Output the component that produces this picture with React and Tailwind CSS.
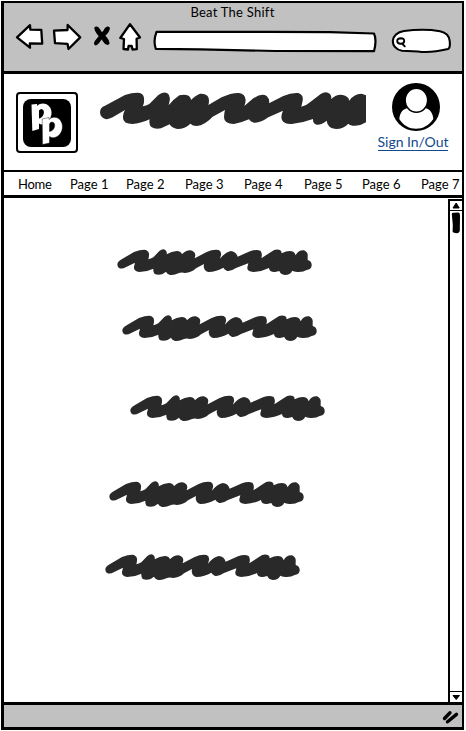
import React from "react";

const SMALL = "M22 73 Q22 65 35 58 L72 36 Q95 28 108 30 Q119 35 117 45 Q117 53 115 58 Q122 57 130 52 L148 33 Q158 25 166 30 Q172 35 170 43 Q185 34 200 33 Q214 34 216 43 Q228 30 242 31 Q255 34 256 45 L254 55 L290 36 Q310 27 326 30 Q335 34 333 46 L330 56 Q345 37 362 33 Q378 34 383 50 L420 34 Q440 27 452 33 Q458 42 454 55 L484 35 Q497 25 510 30 Q515 33 515 40 Q535 30 550 35 Q556 40 557 46 Q565 30 582 31 Q595 37 593 50 L593 60 Q606 63 605 77 Q603 88 590 90 Q580 97 562 96 Q550 94 547 92 Q540 105 525 105 Q511 103 508 93 L495 96 Q478 97 477 84 Q455 95 430 96 Q410 95 412 82 L415 70 L378 84 Q362 95 350 92 Q342 88 340 83 Q320 95 295 96 Q278 92 282 72 L258 85 Q245 98 225 99 Q213 96 205 100 Q190 107 178 104 Q170 101 168 95 L158 102 Q145 107 134 102 Q129 97 130 86 Q110 96 88 96 Q70 93 72 80 L75 68 L47 82 Q35 89 26 83 Q22 80 22 73 Z";
const LARGE = "M30 97 Q30 82 45 77 L105 45 Q130 37 150 39 Q164 44 162 62 Q163 70 158 79 Q168 77 178 72 L205 45 Q220 33 232 40 Q242 46 239 62 L236 76 Q250 58 268 46 Q285 41 297 48 Q304 56 303 60 Q318 45 330 41 Q350 40 355 52 Q359 62 355 75 L395 52 Q425 38 447 39 Q466 42 467 60 Q467 68 463 78 L490 55 Q515 38 530 48 Q540 58 537 70 L580 48 Q605 37 625 39 Q641 44 638 62 L634 80 Q648 77 658 68 L692 42 Q708 32 720 42 Q726 50 723 58 Q740 42 758 45 Q775 48 778 62 Q790 42 815 41 L828 46 L828 127 Q808 140 788 137 Q778 135 775 131 Q760 147 738 147 Q712 144 710 122 Q695 135 680 134 Q668 130 669 117 Q640 128 605 132 Q575 134 574 112 Q575 100 579 92 L535 112 Q510 130 492 128 Q480 125 477 118 Q455 128 432 132 Q402 132 402 112 Q402 100 405 90 L368 110 Q345 135 320 138 Q308 138 301 131 Q285 147 262 147 Q245 144 239 133 L213 145 Q195 149 183 140 Q176 132 179 118 Q160 128 128 132 Q98 132 99 112 Q98 102 105 90 L68 112 Q55 119 46 117 Q31 113 30 97 Z";

function Scribble({ className }) {
  return (
    <svg className={`h-[30px] w-[210px] shrink-0 ${className}`} viewBox="0 18 630 90">
      <path d={SMALL} fill="#292929" />
    </svg>
  );
}

function NavIcons() {
  return (
    <svg className="h-[36px] w-[134px] shrink-0" viewBox="12 20 134 36" fill="white" stroke="black" strokeWidth="2.3" strokeLinejoin="round" strokeLinecap="round">
      <path d="M17 37.3 L30 25.2 L30.3 29.6 L41.3 29.8 L42.2 43.6 L29.8 43.4 L30 47.7 Z" />
      <path d="M54 30.7 L67.5 30 L67.7 25 L80.2 37.4 L68.5 49 L67.5 43.8 L55 43.2 Z" />
      <path fill="black" strokeWidth="1.2" d="M95 27.5 Q98 26 101 32 Q103 33.5 105 29 Q107.5 26 109.3 27.8 Q109.5 31 104.5 35.8 Q108.5 39.5 109 43.5 Q107.5 45.5 104.5 42.5 L101.5 38.5 Q97.5 45 95.5 44.8 Q93.8 43.5 95.5 41 L99.5 36 Q94.5 30.5 95 27.5 Z" />
      <path d="M130 24.2 L140 37.5 L136.6 38.8 L136.8 49.2 L132.5 49.5 L131.7 46 L128.6 46 L128 49.5 L123.5 49 L124 39 L120.3 38 Z" />
    </svg>
  );
}

function Browser() {
  return (
    <header className="flex h-[73px] flex-col border-t-2 border-b-3 border-black bg-[#c1c1c1]">
      <div className="flex h-[17px] items-end justify-center pr-[1px]">
        <span className="text-[13px] leading-[16px] tracking-[0.25px] whitespace-nowrap">Beat The Shift</span>
      </div>
      <div className="flex pl-[8px]">
        <NavIcons />
        <svg className="ml-[5px] h-[34px] w-[230px] shrink-0" viewBox="151 20 230 34" fill="white" stroke="black" strokeWidth="2.2" strokeLinejoin="round">
          <path d="M156.5 31.8 L270 31.8 L330 32.2 L374 33.5 Q377 40 374 51.2 L275 51 L200 49.3 L155.8 48.8 Q153 41 156.5 31.8 Z" />
        </svg>
        <svg className="ml-[7px] h-[34px] w-[66px] shrink-0" viewBox="388 20 66 34" fill="white" stroke="black" strokeWidth="2.1" strokeLinecap="round">
          <path d="M404 31 Q424 28.5 440 31.2 Q449 33 449.7 41 Q450.5 48 448 49 Q430 53.3 418 51.5 L402 50.8 C389 48 390 33 404 31 Z" />
          <path d="M397.2 41 Q397.2 38.2 401 38.2 Q404.3 38.3 404.2 41.2 Q404 44 400.5 43.8 Q397.3 43.6 397.2 41 M402 43.5 L404.8 46.3" strokeWidth="1.9" />
        </svg>
      </div>
    </header>
  );
}

function Logo() {
  return (
    <div className="mt-[18px] ml-[12px] flex h-[61px] w-[62px] shrink-0 items-center justify-center rounded-[4px] border-2 border-black bg-white">
      <svg className="h-[48px] w-[48px]" viewBox="23 98 48 48">
        <rect x="23" y="98" width="48" height="48" rx="8" fill="black" />
        <path fill="white" fillRule="evenodd" d="M31.5 103.5 L37 103 L37.2 105 C42 100 51 103 51.5 111 C52 119 44 126 39 122.5 L39 128 L32.3 130 Z M39 109.5 L39 117.5 C43.7 117 46 109 41.5 108 Q40 108 39 109.5 Z" />
        <path fill="white" stroke="black" strokeWidth=".4" fillRule="evenodd" d="M42.2 118 L49 116.5 L49 118.5 C54 113.5 62 117 62.4 125 C63 133 55 139.5 49.5 135.5 L49.5 142 L42.5 143.5 Z M49.5 123 L49.5 130.5 C54.5 130.5 57 121.5 52 121 Q50.3 121 49.5 123 Z" />
      </svg>
    </div>
  );
}

function Brand() {
  return (
    <section className="flex h-[96px]">
      <Logo />
      <svg className="mt-[11px] ml-[17px] h-[50px] w-[271px] shrink-0" viewBox="15 15 813 150">
        <path d={LARGE} fill="#292929" />
      </svg>
      <div className="mt-[9px] ml-[11px] flex w-[72px] flex-col items-center">
        <svg className="ml-[6px] h-[48px] w-[48px] shrink-0" viewBox="0 0 48 48">
          <circle cx="24" cy="24" r="24" fill="black" />
          <path d="M7.3 36 C8 29 11 26 16 25 C20 30 29 30 33 25 C38 26 41 30 41.3 36 C33 49 15 49 7.3 36 Z" fill="white" />
          <ellipse cx="24.4" cy="17.2" rx="11.3" ry="12" fill="white" stroke="black" strokeWidth="1.6" />
        </svg>
        <a className="mt-[2px] h-[18px] border-b border-[#114a8c] text-[14px] leading-[18px] tracking-[-0.05px] whitespace-nowrap text-[#114a8c]">Sign In/Out</a>
      </div>
    </section>
  );
}

function Nav() {
  return (
    <nav className="flex h-[28px] border-t-2 border-b-3 border-black bg-white pl-[14px] text-[13px] leading-[24px] whitespace-nowrap">
      <span className="w-[52px] tracking-[-0.3px]">Home</span>
      <span className="w-[56px]">Page 1</span>
      <span className="w-[59px]">Page 2</span>
      <span className="w-[59px]">Page 3</span>
      <span className="w-[60px]">Page 4</span>
      <span className="w-[58px]">Page 5</span>
      <span className="w-[59px]">Page 6</span>
      <span>Page 7</span>
    </nav>
  );
}

function Scrollbar() {
  return (
    <aside className="mt-[1px] flex w-[14px] shrink-0 flex-col border-t-2 border-l-2 border-black">
      <svg className="h-[10px] w-[12px] border-b border-black" viewBox="0 0 12 9">
        <path d="M3 7 L6.2 2 L9.2 7 Z" stroke="black" strokeLinejoin="round" />
      </svg>
      <svg className="mt-[1px] h-[22px] w-[12px]" viewBox="0 0 12 22">
        <path d="M1.8 2 Q2 0.6 4 0.8 L8.5 0.6 Q10.2 1 10 4 L9.8 19 Q9 21.3 6.8 21.3 Q2.4 21 2.6 19 L2.8 13 Z" />
      </svg>
      <svg className="mt-auto h-[11px] w-[12px] border-t border-black" viewBox="0 0 12 9">
        <path d="M3 3 L9.5 3 L6.2 7 Z" stroke="black" strokeLinejoin="round" />
      </svg>
    </aside>
  );
}

export default function App() {
  return (
    <div className="h-[731px] w-[466px] overflow-hidden bg-white pt-px pl-px font-['Lato','Liberation_Sans',sans-serif] text-black">
      <div className="flex h-[729px] w-[463px] flex-col border-r-2 border-l-3 border-black">
        <Browser />
        <Brand />
        <Nav />
        <main className="flex h-[504px] justify-between">
          <div className="flex flex-col">
            <Scribble className="mt-[48px] ml-[106px]" />
            <Scribble className="mt-[36px] ml-[111px]" />
            <Scribble className="mt-[50px] ml-[119px]" />
            <Scribble className="mt-[56px] ml-[98px]" />
            <Scribble className="mt-[43px] ml-[94px]" />
          </div>
          <Scrollbar />
        </main>
        <footer className="flex flex-1 items-center justify-end border-y-3 border-black bg-[#c1c1c1]">
          <svg className="mr-[2px] h-[18px] w-[20px]" viewBox="440 708 20 18" fill="none" stroke="black" strokeWidth="3.4" strokeLinecap="round">
            <path d="M444.5 719.5 L450 713.8 M447.5 722.8 L456.5 715.4" />
          </svg>
        </footer>
      </div>
    </div>
  );
}
